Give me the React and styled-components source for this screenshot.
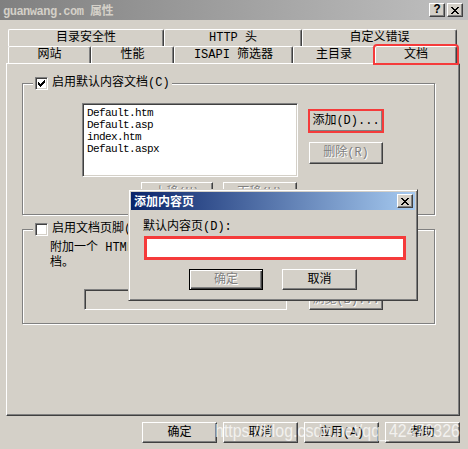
import styled, { createGlobalStyle, css } from "styled-components"

const FONT = `"Liberation Mono", "Noto Sans CJK SC", monospace`

const GlobalStyle = createGlobalStyle`
    body {
        margin: 0;
        background: #d4d0c8;
        font-family: ${FONT};
        font-size: 12px;
    }
`

const raised = css`
    border: 1px solid;
    border-color: #fff #404040 #404040 #fff;
    box-shadow: inset -1px -1px 0 #808080;
`

const sunken = css`
    border: 1px solid;
    border-color: #808080 #fff #fff #808080;
    box-shadow: inset 1px 1px 0 #404040, inset -1px -1px 0 #d4d0c8;
`

export default function App() {
    const topTabs = [
        { label: "目录安全性", w: 156 },
        { label: "HTTP 头", w: 138 },
        { label: "自定义错误", w: 155 },
    ]
    const bottomTabs = [
        { label: "网站", w: 83 },
        { label: "性能", w: 83 },
        { label: "ISAPI 筛选器", w: 119 },
        { label: "主目录", w: 82 },
        { label: "文档", w: 82, active: true },
    ]
    const docs = ["Default.htm", "Default.asp", "index.htm", "Default.aspx"]

    return (
        <>
            <GlobalStyle />
            <Window>
                <TitleBar>
                    <TitleText>guanwang.com 属性</TitleText>
                    <TitleButtons>
                        <CaptionButton><b>?</b></CaptionButton>
                        <CaptionButton><CloseGlyph /></CaptionButton>
                    </TitleButtons>
                </TitleBar>

                <TabRows>
                    <TabRow>
                        {topTabs.map(t => <Tab key={t.label} $w={t.w}>{t.label}</Tab>)}
                    </TabRow>
                    <TabRow>
                        {bottomTabs.map(t => <Tab key={t.label} $w={t.w} $active={t.active}>{t.label}</Tab>)}
                    </TabRow>
                </TabRows>

                <Panel>
                    <Group $h={132}>
                        <Legend>
                            <CheckBox><CheckMark /></CheckBox>
                            <span>启用默认内容文档(C)</span>
                        </Legend>
                        <ListRow>
                            <ListBox>
                                {docs.map(d => <ListItem key={d}>{d}</ListItem>)}
                            </ListBox>
                            <SideButtons>
                                <Button $w={74} $h={22} $marked>添加(D)...</Button>
                                <Button $w={74} $h={22} $disabled>删除(R)</Button>
                            </SideButtons>
                        </ListRow>
                        <MoveRow>
                            <Button $w={72} $h={22} $disabled>上移(U)</Button>
                            <Button $w={74} $h={22} $disabled>下移(W)</Button>
                        </MoveRow>
                    </Group>

                    <Group $h={95} $gap={14}>
                        <Legend>
                            <CheckBox />
                            <span>启用文档页脚(O)</span>
                        </Legend>
                        <Desc>
                            附加一个 HTML 格式的页脚到您的 Web 服务器返回的每一个文<br />档。
                        </Desc>
                        <FooterRow>
                            <TextField />
                            <Button $w={74} $h={21} $disabled>浏览(B)...</Button>
                        </FooterRow>
                    </Group>
                </Panel>

                <BottomBar>
                    <Button $w={75} $h={21}>确定</Button>
                    <Button $w={75} $h={21}>取消</Button>
                    <Button $w={75} $h={21}>应用(A)</Button>
                    <Button $w={75} $h={21}>帮助</Button>
                </BottomBar>

                <Modal>
                    <ModalTitle>
                        <span>添加内容页</span>
                        <CaptionButton><CloseGlyph /></CaptionButton>
                    </ModalTitle>
                    <ModalBody>
                        <Label>默认内容页(D):</Label>
                        <Input />
                        <ModalButtons>
                            <Button $w={74} $h={21} $disabled $default>确定</Button>
                            <Button $w={75} $h={21}>取消</Button>
                        </ModalButtons>
                    </ModalBody>
                </Modal>

                <Watermark>https://blog.csdn.net/qq_42476326</Watermark>
            </Window>
        </>
    )
}

function CloseGlyph() {
    return (
        <svg width="8" height="7" viewBox="0 0 8 7" shapeRendering="crispEdges">
            <path d="M0 0h2v1h-2zM6 0h2v1h-2zM1 1h2v1h-2zM5 1h2v1h-2zM2 2h4v1h-4zM3 3h2v1h-2zM2 4h4v1h-4zM1 5h2v1h-2zM5 5h2v1h-2zM0 6h2v1h-2zM6 6h2v1h-2z" fill="#000" />
        </svg>
    )
}

function CheckMark() {
    return (
        <svg width="7" height="7" viewBox="0 0 7 7" shapeRendering="crispEdges">
            <path d="M6 0h1v3h-1zM5 1h1v3h-1zM4 2h1v3h-1zM3 3h1v3h-1zM2 4h1v3h-1zM1 3h1v3h-1zM0 2h1v3h-1z" fill="#000" />
        </svg>
    )
}

const Window = styled.div`
    position: relative;
    width: 468px;
    height: 449px;
    background: #d4d0c8;
    display: flex;
    flex-direction: column;
    overflow: hidden;
`

const TitleBar = styled.div`
    height: 20px;
    background: linear-gradient(to right, #808080, #c0c0c0);
    display: flex;
    align-items: center;
    justify-content: space-between;
    padding: 0 5px 0 3px;
`

const TitleText = styled.div`
    color: #d4d0c8;
    font-weight: bold;
    font-size: 12px;
    letter-spacing: -0.5px;
`

const TitleButtons = styled.div`
    display: flex;
    gap: 2px;
`

const CaptionButton = styled.div`
    width: 16px;
    height: 14px;
    box-sizing: border-box;
    background: #d4d0c8;
    ${raised};
    display: flex;
    align-items: center;
    justify-content: center;
    font-size: 12px;
    line-height: 12px;
    color: #000;
`

const TabRows = styled.div`
    margin-top: 9px;
    padding-left: 8px;
    display: flex;
    flex-direction: column;
`

const TabRow = styled.div`
    display: flex;
    height: 17px;
`

const Tab = styled.div`
    width: ${p => p.$w}px;
    box-sizing: border-box;
    border: 1px solid;
    border-bottom: none;
    border-color: #fff #404040 transparent #fff;
    border-radius: 2px 2px 0 0;
    box-shadow: inset -1px 0 0 #808080;
    display: flex;
    align-items: center;
    justify-content: center;
    line-height: 14px;
    color: #000;
    ${p => p.$active && css`
        outline: 2px solid #f53b3b;
        outline-offset: 0;
        position: relative;
        z-index: 1;
    `}
`

const Panel = styled.div`
    margin-left: 6px;
    width: 454px;
    height: 353px;
    box-sizing: border-box;
    ${raised};
    padding: 19px 0 0 15px;
    display: flex;
    flex-direction: column;
`

const Group = styled.div`
    width: 413px;
    height: ${p => p.$h}px;
    margin-top: ${p => p.$gap || 0}px;
    box-sizing: border-box;
    border: 1px solid #808080;
    box-shadow: 1px 1px 0 #fff, inset 1px 1px 0 #fff;
    display: flex;
    flex-direction: column;
`

const Legend = styled.div`
    margin: -8px 0 0 10px;
    height: 14px;
    padding: 0 2px;
    align-self: flex-start;
    background: #d4d0c8;
    display: flex;
    align-items: center;
    gap: 4px;
    line-height: 14px;
`

const CheckBox = styled.div`
    width: 13px;
    height: 13px;
    box-sizing: border-box;
    background: #fff;
    ${sunken};
    display: flex;
    align-items: center;
    justify-content: center;
`

const ListRow = styled.div`
    display: flex;
    margin-top: 13px;
    padding-left: 59px;
`

const ListBox = styled.div`
    width: 216px;
    height: 74px;
    box-sizing: border-box;
    background: #fff;
    ${sunken};
    padding: 3px 0 0 4px;
`

const ListItem = styled.div`
    font-family: "Liberation Mono", monospace;
    font-size: 11px;
    letter-spacing: -0.6px;
    line-height: 12px;
    color: #000;
`

const SideButtons = styled.div`
    display: flex;
    flex-direction: column;
    gap: 10px;
    margin-left: 11px;
    padding-top: 7px;
`

const MoveRow = styled.div`
    display: flex;
    gap: 10px;
    margin-top: 5px;
    padding-left: 118px;
`

const Button = styled.div`
    width: ${p => p.$w}px;
    height: ${p => p.$h}px;
    box-sizing: border-box;
    background: #d4d0c8;
    ${raised};
    display: flex;
    align-items: center;
    justify-content: center;
    line-height: 14px;
    color: #000;
    ${p => p.$disabled && css`
        color: #808080;
        text-shadow: 1px 1px 0 #fff;
    `}
    ${p => p.$default && css`
        border: 1px solid #000;
        box-shadow: inset 1px 1px 0 #fff, inset -1px -1px 0 #404040, inset -2px -2px 0 #808080;
    `}
    ${p => p.$marked && css`
        outline: 2px solid #f53b3b;
        outline-offset: -1px;
    `}
`

const Desc = styled.div`
    margin-top: 5px;
    padding-left: 27px;
    line-height: 15px;
    white-space: nowrap;
    color: #000;
`

const FooterRow = styled.div`
    display: flex;
    gap: 22px;
    margin-top: 18px;
    padding-left: 61px;
`

const TextField = styled.div`
    width: 203px;
    height: 21px;
    box-sizing: border-box;
    background: #d4d0c8;
    ${sunken};
`

const BottomBar = styled.div`
    display: flex;
    justify-content: flex-end;
    gap: 6px;
    margin-top: 6px;
    padding-right: 8px;
`

const Modal = styled.div`
    position: absolute;
    left: 128px;
    top: 189px;
    width: 290px;
    height: 112px;
    box-sizing: border-box;
    background: #d4d0c8;
    border: 1px solid;
    border-color: #d4d0c8 #404040 #404040 #d4d0c8;
    box-shadow: inset 1px 1px 0 #fff, inset -1px -1px 0 #808080;
    padding: 2px;
    display: flex;
    flex-direction: column;
    z-index: 5;
`

const ModalTitle = styled.div`
    height: 18px;
    background: linear-gradient(to right, #0a246a, #a6caf0);
    display: flex;
    align-items: center;
    justify-content: space-between;
    padding: 0 2px 0 3px;
    color: #fff;
    font-weight: bold;
    font-size: 12px;
`

const ModalBody = styled.div`
    display: flex;
    flex-direction: column;
    padding-left: 12px;
`

const Label = styled.div`
    margin-top: 10px;
    line-height: 14px;
    color: #000;
`

const Input = styled.div`
    margin: 2px 0 0 1px;
    width: 262px;
    height: 24px;
    box-sizing: border-box;
    background: #fff;
    ${sunken};
    outline: 3px solid #f53b3b;
    outline-offset: -3px;
`

const ModalButtons = styled.div`
    display: flex;
    gap: 19px;
    margin-top: 9px;
    padding-left: 46px;
`

const Watermark = styled.div`
    position: absolute;
    left: 215px;
    top: 419px;
    font-family: "Liberation Sans", Arial, sans-serif;
    font-size: 19px;
    line-height: 24px;
    color: rgba(255, 255, 255, 0.72);
    transform: scaleX(0.84);
    transform-origin: left top;
    white-space: nowrap;
    pointer-events: none;
    z-index: 6;
`
